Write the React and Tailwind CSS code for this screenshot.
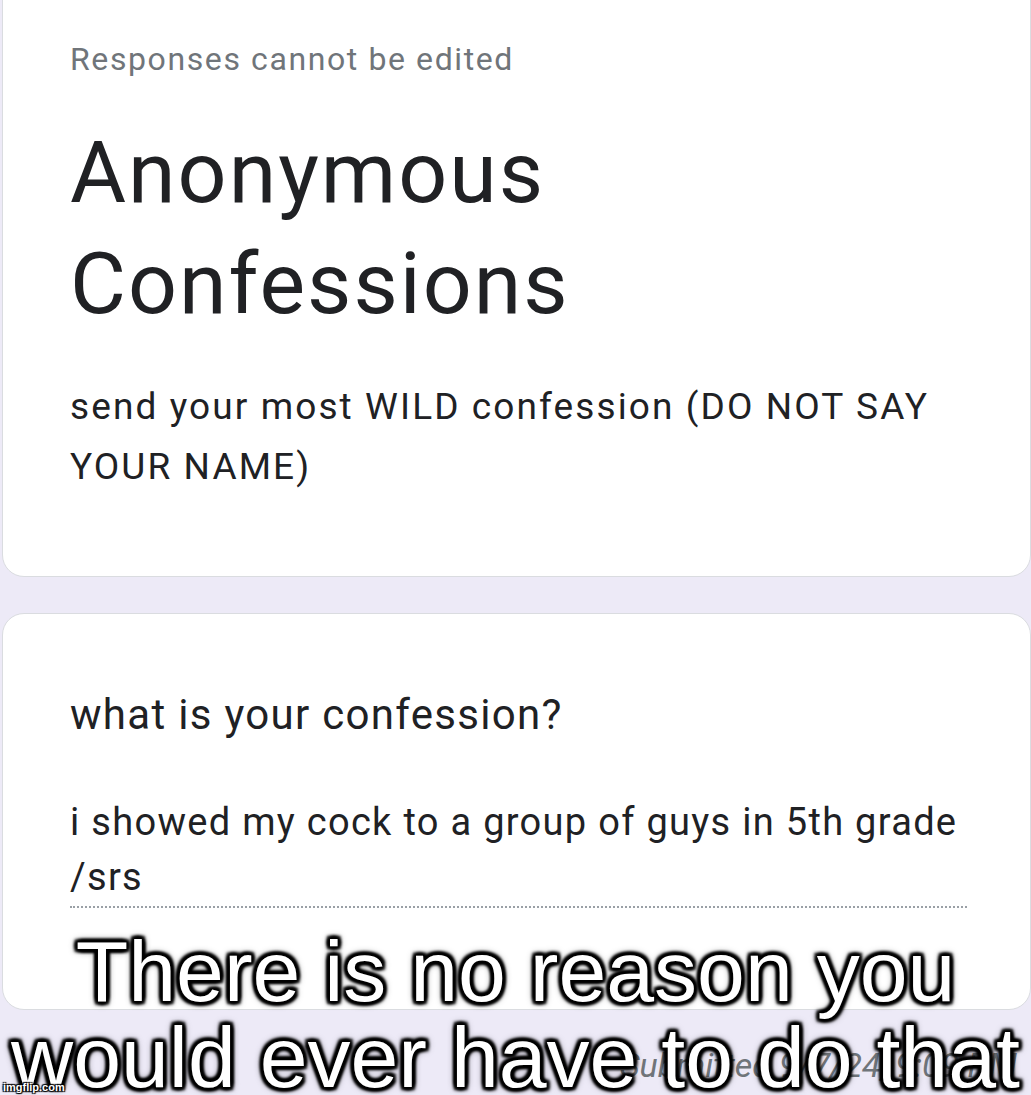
import React from 'react';

const roboto = { fontFamily: 'Roboto, "Noto Sans", sans-serif' };

const captionShadow =
  '[text-shadow:3px_3px_3px_#000,-3px_3px_3px_#000,3px_-3px_3px_#000,-3px_-3px_3px_#000,0_3px_3px_#000,0_-3px_3px_#000,3px_0_3px_#000,-3px_0_3px_#000,0_0_8px_#000]';

const App = () => {
  return (
    <div className="relative w-[1031px] h-[1095px] overflow-hidden bg-[#edeaf7]" style={roboto}>
      <div className="flex flex-col gap-[36px] pl-[2px]">
        {/* header card */}
        <div className="-mt-[30px] h-[607px] bg-white border border-[#dadce0] rounded-[22px] pl-[67px] pt-[68px]">
          <p className="text-[32px] leading-[40px] tracking-[1.6px] text-[#70757a]">Responses cannot be edited</p>
          <h1 className="mt-[38px] text-[86px] leading-[111px] tracking-[2px] text-[#202124] w-[600px]">
            Anonymous Confessions
          </h1>
          <p className="mt-[38px] text-[37px] leading-[60px] tracking-[2.1px] text-[#202124] w-[890px]">
            send your most WILD confession (DO NOT SAY YOUR NAME)
          </p>
        </div>

        {/* question card */}
        <div className="h-[397px] bg-white border border-[#dadce0] rounded-[22px] pl-[67px] pr-[64px] pt-[77px]">
          <p className="text-[42px] leading-[48px] tracking-[1.3px] text-[#202124]">what is your confession?</p>
          <p className="mt-[56px] text-[38px] leading-[55px] tracking-[1.3px] text-[#202124] w-[897px]">
            i showed my cock to a group of guys in 5th grade /srs
          </p>
          <div className="mt-[1px] border-b-2 border-dotted border-[#9aa0a6] w-[897px]"></div>
        </div>

        <p className="-mt-[6px] pl-[618px] text-[34px] italic text-[#70757a]">Submitted 9/7/24, 9:09 PM</p>
      </div>

      {/* meme caption */}
      <div
        className={`absolute left-0 right-0 top-[928px] text-center text-white text-[86px] leading-[86px] whitespace-nowrap ${captionShadow}`}
        style={{ fontFamily: '"Liberation Sans", Arial, sans-serif' }}
      >
        <div>There is no reason you</div>
        <div>would ever have to do that</div>
      </div>

      <div
        className="absolute left-[3px] bottom-[2px] text-[11px] leading-[12px] text-white font-bold [text-shadow:1px_1px_1px_#000,-1px_-1px_1px_#000,1px_-1px_1px_#000,-1px_1px_1px_#000]"
        style={{ fontFamily: '"Liberation Sans", Arial, sans-serif' }}
      >
        imgflip.com
      </div>
    </div>
  );
};

export default App;
